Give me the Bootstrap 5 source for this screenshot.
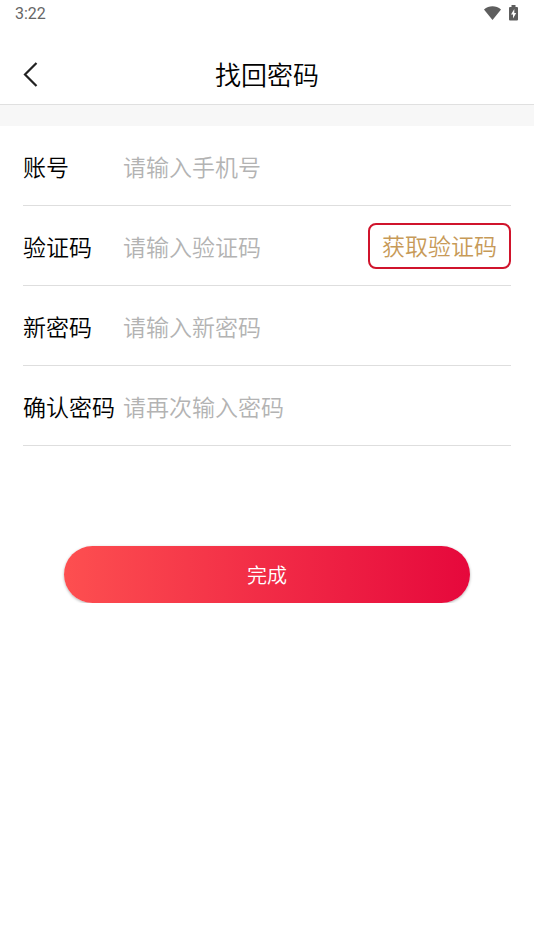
<!DOCTYPE html>
<html lang="zh-CN">
<head>
<meta charset="utf-8">
<meta name="viewport" content="width=device-width, initial-scale=1">
<title>找回密码</title>
<link href="https://cdn.jsdelivr.net/npm/bootstrap@5.3.0/dist/css/bootstrap.min.css" rel="stylesheet">
<style>
  body { font-family: "Noto Sans CJK SC", sans-serif; font-weight: 350; color: #000; background: #fff; }
  .status-bar { height: 28px; padding: 0 15px; font-family: Roboto, sans-serif; font-size: 16px; font-weight: 400; line-height: 28px; color: #666; }
  .status-icons { padding: 0 1px 2px 0; }
  .title-bar { height: 77px; padding: 15px 23px 0; border-bottom: 1px solid #e0e0e0; }
  .title-bar h1 { font-size: 26px; line-height: 36px; font-weight: 350; }
  .side { width: 32px; }
  .band { height: 21px; background: #f7f7f7; }
  .form-area { padding: 0 23px; font-size: 23px; }
  .field { height: 80px; border-bottom: 1px solid #dedede; }
  .field-label { width: 100px; line-height: 34px; }
  .field .form-control { min-width: 0; font-size: 23px; font-weight: 350; line-height: 34px; }
  .field .form-control::placeholder { color: #b3b3b3; opacity: 1; }
  .code-btn { height: 46px; padding: 0 12px 2px; font-size: 23px; line-height: 34px; font-weight: 350; color: #c79a58; border: 2px solid #d0142c; border-radius: 8px; }
  .submit-wrap { padding: 100px 64px 0; }
  .submit-btn { height: 57px; font-size: 20px; font-weight: 350; line-height: 30px; color: #fff; background: linear-gradient(90deg, #fd4f50, #e6083c); box-shadow: 0 1px 3px rgba(0, 0, 0, .3); }
</style>
<script src="https://cdn.jsdelivr.net/npm/bootstrap@5.3.0/dist/js/bootstrap.bundle.min.js" defer></script>
</head>
<body>
<div class="status-bar d-flex align-items-center justify-content-between">
  <span>3:22</span>
  <span class="status-icons d-flex align-items-center gap-2">
    <svg width="17" height="16" viewBox="0 0 17 16" fill="#5e5e5e" aria-hidden="true"><path d="M0 4.500C5 .2 12 .2 17 4.500L8.500 15z"/></svg>
    <svg width="9" height="16" viewBox="0 0 9 16" aria-hidden="true"><path fill="#5e5e5e" d="M2.500 0h4v2H8a1 1 0 0 1 1 1v11.500a1 1 0 0 1-1 1H1a1 1 0 0 1-1-1V3a1 1 0 0 1 1-1h1.500z"/><path fill="#fff" d="M5.300 4 2 9.500h2V13.500L7.200 8H5.300z"/></svg>
  </span>
</div>
<header class="title-bar d-flex align-items-center justify-content-between">
  <button type="button" class="side btn border-0 p-0 text-start d-flex" aria-label="返回">
    <svg width="16" height="26" viewBox="0 0 16 26" fill="none" stroke="#222" stroke-width="2.200" aria-hidden="true"><path d="M13.500 2 2 13.500 13.500 25"/></svg>
  </button>
  <h1 class="m-0">找回密码</h1>
  <span class="side"></span>
</header>
<div class="band"></div>
<main>
<form>
  <div class="form-area">
    <div class="field d-flex align-items-center">
      <label class="field-label flex-shrink-0 text-nowrap" for="account">账号</label>
      <input class="form-control border-0 p-0 shadow-none bg-transparent" id="account" type="tel" placeholder="请输入手机号">
    </div>
    <div class="field d-flex align-items-center">
      <label class="field-label flex-shrink-0 text-nowrap" for="code">验证码</label>
      <input class="form-control border-0 p-0 shadow-none bg-transparent" id="code" type="text" placeholder="请输入验证码">
      <button type="button" class="btn code-btn flex-shrink-0 text-nowrap">获取验证码</button>
    </div>
    <div class="field d-flex align-items-center">
      <label class="field-label flex-shrink-0 text-nowrap" for="newpass">新密码</label>
      <input class="form-control border-0 p-0 shadow-none bg-transparent" id="newpass" type="password" placeholder="请输入新密码">
    </div>
    <div class="field d-flex align-items-center">
      <label class="field-label flex-shrink-0 text-nowrap" for="confirm">确认密码</label>
      <input class="form-control border-0 p-0 shadow-none bg-transparent" id="confirm" type="password" placeholder="请再次输入密码">
    </div>
  </div>
  <div class="submit-wrap">
    <button type="submit" class="btn submit-btn w-100 border-0 rounded-pill p-0">完成</button>
  </div>
</form>
</main>
</body>
</html>
